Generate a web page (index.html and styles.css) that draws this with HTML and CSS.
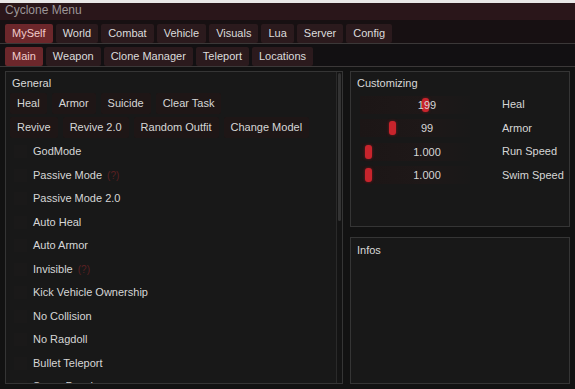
FILE: index.html
```html
<!DOCTYPE html>
<html lang="en">
  <head>
    <meta charset="UTF-8" />
    <title>Cyclone Menu</title>
    <link rel="stylesheet" href="styles.css">
  </head>
  <body>
    <div class="topline"></div>
    <div class="titlebar">Cyclone Menu</div>

    <div class="tabs">
      <span class="tab active">MySelf</span>
      <span class="tab">World</span>
      <span class="tab">Combat</span>
      <span class="tab">Vehicle</span>
      <span class="tab">Visuals</span>
      <span class="tab">Lua</span>
      <span class="tab">Server</span>
      <span class="tab">Config</span>
    </div>
    <div class="tabs sub">
      <span class="tab active">Main</span>
      <span class="tab">Weapon</span>
      <span class="tab">Clone Manager</span>
      <span class="tab">Teleport</span>
      <span class="tab">Locations</span>
    </div>

    <div class="main">
      <div class="panel general">
        <div class="panel-title">General</div>
        <div class="btn-row">
          <span class="btn">Heal</span>
          <span class="btn">Armor</span>
          <span class="btn">Suicide</span>
          <span class="btn">Clear Task</span>
        </div>
        <div class="btn-row">
          <span class="btn">Revive</span>
          <span class="btn">Revive 2.0</span>
          <span class="btn">Random Outfit</span>
          <span class="btn">Change Model</span>
        </div>
        <ul class="checks">
          <li><span class="box"></span>GodMode</li>
          <li><span class="box"></span>Passive Mode <span class="hint">(?)</span></li>
          <li><span class="box"></span>Passive Mode 2.0</li>
          <li><span class="box"></span>Auto Heal</li>
          <li><span class="box"></span>Auto Armor</li>
          <li><span class="box"></span>Invisible <span class="hint">(?)</span></li>
          <li><span class="box"></span>Kick Vehicle Ownership</li>
          <li><span class="box"></span>No Collision</li>
          <li><span class="box"></span>No Ragdoll</li>
          <li><span class="box"></span>Bullet Teleport</li>
          <li><span class="box"></span>Super Punch</li>
        </ul>
        <div class="scrollbar"><div class="thumb"></div></div>
      </div>

      <div class="side">
        <div class="panel custom">
          <div class="panel-title">Customizing</div>
          <div class="slider-row">
            <div class="slider"><span class="grab" style="left: 62px"></span><span class="val">199</span></div>
            <span class="slabel">Heal</span>
          </div>
          <div class="slider-row">
            <div class="slider"><span class="grab" style="left: 29px"></span><span class="val">99</span></div>
            <span class="slabel">Armor</span>
          </div>
          <div class="slider-row">
            <div class="slider"><span class="grab" style="left: 5px"></span><span class="val">1.000</span></div>
            <span class="slabel">Run Speed</span>
          </div>
          <div class="slider-row">
            <div class="slider"><span class="grab" style="left: 5px"></span><span class="val">1.000</span></div>
            <span class="slabel">Swim Speed</span>
          </div>
        </div>
        <div class="panel infos">
          <div class="panel-title">Infos</div>
        </div>
      </div>
    </div>
  </body>
</html>
```

FILE: styles.css
```css
body {
  margin: 0;
  background: #121212;
  color: #d6d6d6;
  font-family: "Liberation Sans", Arial, sans-serif;
  font-size: 11px;
  line-height: 13px;
  height: 389px;
  overflow: hidden;
}
.topline {
  height: 3px;
  background: #e9e7e7;
}
.titlebar {
  height: 17px;
  line-height: 15px;
  padding-left: 5px;
  background: #2a161a;
  color: #9b9597;
  font-size: 12px;
}
.tabs {
  display: flex;
  gap: 3px;
  padding: 4px 5px 0;
  background: #171012;
  border-bottom: 1px solid #3b3838;
}
.tab {
  padding: 3px 7px;
  background: #2b1a1d;
  color: #dcdcdc;
  border-radius: 2px;
}
.tab.active {
  background: #6c272b;
  color: #f2cccc;
}
.sub {
  padding-top: 3px;
  background: #121012;
}
.main {
  display: grid;
  grid-template-columns: 338px 1fr;
  gap: 7px;
  padding: 4px 5px 0;
}
.panel {
  position: relative;
  background: #181818;
  border: 1px solid #353535;
  box-sizing: border-box;
}
.panel-title {
  padding: 5px 6px 3px;
  color: #d8d8d8;
}
.general {
  height: 313px;
  overflow: hidden;
}
.btn-row {
  display: flex;
  gap: 5px;
  padding: 0 4px;
  margin-bottom: 3px;
}
.btn {
  padding: 4px 7px;
  background: #1e1616;
  border-radius: 2px;
}
.checks {
  list-style: none;
  margin: -1px 0 0;
  padding: 0 0 0 8px;
}
.checks li {
  display: flex;
  align-items: center;
  height: 23.5px;
}
.box {
  width: 13px;
  height: 13px;
  margin-right: 6px;
  background: #1a1919;
}
.hint {
  margin-left: 5px;
  color: #5a2022;
  font-size: 10px;
}
.scrollbar {
  position: absolute;
  top: 0;
  right: 0;
  bottom: 0;
  width: 5px;
  border-left: 1px solid #2a2a2a;
  background: #141414;
}
.thumb {
  height: 148px;
  margin: 1px;
  background: #333;
  border-radius: 2px;
}
.side {
  display: flex;
  flex-direction: column;
  gap: 10px;
}
.custom {
  height: 156px;
}
.infos {
  height: 147px;
}
.infos .panel-title {
  padding-top: 6px;
}
.slider-row {
  display: flex;
  align-items: center;
  height: 23.5px;
  padding-left: 9px;
}
.slider {
  position: relative;
  width: 110px;
  height: 18px;
  line-height: 18px;
  text-align: center;
  background: linear-gradient(90deg, #1c1616, #1e1818 60%, #191818);
}
.val {
  position: relative;
  padding-left: 24px;
}
.grab {
  position: absolute;
  top: 2px;
  width: 7px;
  height: 14px;
  border-radius: 3px;
  background: #c8242c;
  box-shadow: 0 0 3px #7a1a1e;
}
.slabel {
  margin-left: 32px;
}
```
